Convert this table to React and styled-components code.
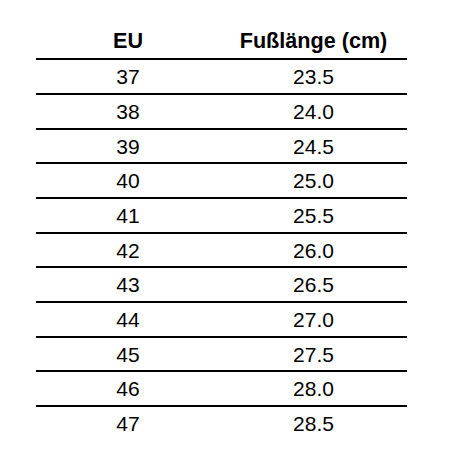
import React from 'react';
import styled, { createGlobalStyle } from 'styled-components';

const GlobalStyle = createGlobalStyle`
  html, body {
    margin: 0;
    padding: 0;
    background: #fff;
  }

  body {
    font-family: "Liberation Sans", Arial, sans-serif;
    color: #000;
  }
`;

const Page = styled.div`
  padding: 24px 0 0 36px;
`;

const Table = styled.div`
  width: 371px;
  display: flex;
  flex-direction: column;
`;

const Row = styled.div`
  display: grid;
  grid-template-columns: 184px 1fr;
  align-items: center;
  box-sizing: border-box;
  height: ${props => props.head ? '34.3px' : '34.7px'};
  border-top: ${props => props.head ? 'none' : '2px solid #000'};
`;

const Cell = styled.div`
  text-align: center;
  font-size: ${props => props.head ? '21.6px' : '21px'};
  font-weight: ${props => props.head ? 700 : 400};
  line-height: 1;
`;

const sizes = [
  ['37', '23.5'],
  ['38', '24.0'],
  ['39', '24.5'],
  ['40', '25.0'],
  ['41', '25.5'],
  ['42', '26.0'],
  ['43', '26.5'],
  ['44', '27.0'],
  ['45', '27.5'],
  ['46', '28.0'],
  ['47', '28.5'],
];

const App = () => (
  <Page>
    <GlobalStyle />
    <Table>
      <Row head>
        <Cell head>EU</Cell>
        <Cell head>Fußlänge (cm)</Cell>
      </Row>
      {sizes.map(([eu, cm]) => (
        <Row key={eu}>
          <Cell>{eu}</Cell>
          <Cell>{cm}</Cell>
        </Row>
      ))}
    </Table>
  </Page>
);

export default App;
